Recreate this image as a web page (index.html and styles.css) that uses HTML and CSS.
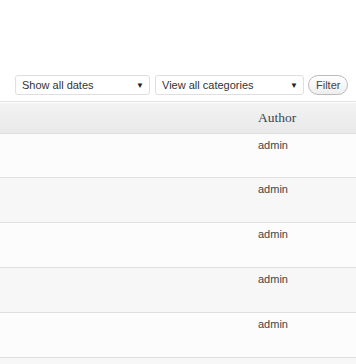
FILE: index.html
```html
<!DOCTYPE html>
<html lang="en">
<head>
    <meta charset="UTF-8">
    <meta name="viewport" content="width=device-width, initial-scale=1.0">
    <title>Posts</title>
    <link rel="stylesheet" href="styles.css">
</head>
<body>
    <div class="toolbar">
        <div class="select dates">
            <span>Show all dates</span>
            <span class="arrow">&#9660;</span>
        </div>
        <div class="select cats">
            <span>View all categories</span>
            <span class="arrow">&#9660;</span>
        </div>
        <button class="filter">Filter</button>
    </div>

    <div class="posts">
        <div class="row head">
            <div class="cell"></div>
            <div class="cell author">Author</div>
        </div>
        <div class="row first">
            <div class="cell"></div>
            <div class="cell">admin</div>
        </div>
        <div class="row alt">
            <div class="cell"></div>
            <div class="cell">admin</div>
        </div>
        <div class="row">
            <div class="cell"></div>
            <div class="cell">admin</div>
        </div>
        <div class="row alt">
            <div class="cell"></div>
            <div class="cell">admin</div>
        </div>
        <div class="row">
            <div class="cell"></div>
            <div class="cell">admin</div>
        </div>
        <div class="row alt last"></div>
    </div>
</body>
</html>
```

FILE: styles.css
```css
body {
    margin: 0;
    background: #fff;
    font-family: 'Liberation Sans', Arial, sans-serif;
    color: #333;
    overflow: hidden;
}

.toolbar {
    display: flex;
    align-items: center;
    gap: 5px;
    padding: 75px 0 0 15px;
    height: 20px;
}

.select {
    display: flex;
    align-items: center;
    justify-content: space-between;
    box-sizing: border-box;
    height: 20px;
    padding: 0 5px 0 6px;
    border: 1px solid #dfdfdf;
    border-radius: 3px;
    background: #fff;
    font-size: 11px;
    color: #333;
}

.dates {
    width: 135px;
}

.cats {
    width: 149px;
}

.arrow {
    font-size: 8px;
    color: #222;
}

.filter {
    margin-left: -1px;
    height: 20px;
    padding: 0 7px;
    border: 1px solid #bbb;
    border-radius: 11px;
    background: linear-gradient(#fff, #eee);
    font-family: 'Liberation Sans', Arial, sans-serif;
    font-size: 11px;
    color: #444;
}

.posts {
    margin-top: 6px;
}

.row {
    display: grid;
    grid-template-columns: 1fr 106px;
    height: 44px;
    border-top: 1px solid #dfdfdf;
    background: #fcfcfc;
}

.row.first {
    height: 43px;
}

.row.alt {
    background: #f7f7f7;
}

.row.last {
    height: 20px;
}

.row.head {
    height: 31px;
    background: linear-gradient(#f3f3f3, #e9e9e9);
    border-top: 1px solid #e1e1e1;
    box-shadow: inset 0 1px 0 #fff;
}

.cell {
    padding: 5px 8px 0;
    font-size: 11px;
    color: #444;
}

.cell.author {
    padding-top: 8px;
    font-family: 'Liberation Serif', Georgia, serif;
    font-size: 13.5px;
    color: #3a4651;
}
```
